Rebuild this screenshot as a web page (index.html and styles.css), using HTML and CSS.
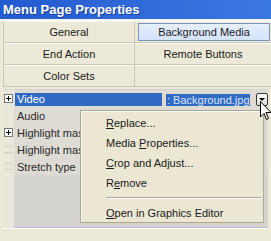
FILE: index.html
```html
<!DOCTYPE html>
<html lang="en">

<head>
  <meta charset="UTF-8">
  <title>Menu Page Properties</title>
  <link rel="stylesheet" href="styles.css">
</head>

<body>
  <div class="title">Menu Page Properties</div>
  <div class="titleLine"></div>

  <div class="tabs">
    <div class="tab">General</div>
    <div class="tab"><span class="tabSel">Background Media</span></div>
    <div class="tab">End Action</div>
    <div class="tab">Remote Buttons</div>
    <div class="tab">Color Sets</div>
    <div class="tab"></div>
  </div>

  <div class="props">
    <div class="row">
      <span class="gutter"><span class="plus"></span></span>
      <span class="label sel">Video</span>
      <span class="value sel">: Background.jpg</span>
      <span class="drop"></span>
    </div>
    <div class="row">
      <span class="gutter"></span>
      <span class="label">Audio</span>
    </div>
    <div class="row">
      <span class="gutter"><span class="plus"></span></span>
      <span class="label">Highlight mask</span>
    </div>
    <div class="row">
      <span class="gutter"><span class="tree"></span></span>
      <span class="label">Highlight mask</span>
    </div>
    <div class="row">
      <span class="gutter"><span class="tree"></span></span>
      <span class="label">Stretch type</span>
    </div>
    <div class="rest"><span class="gutter"></span></div>
  </div>
  <div class="bottomLine"></div>

  <!-- context menu over the grid -->
  <div class="menu">
    <div class="item"><u>R</u>eplace...</div>
    <div class="item">Media <u>P</u>roperties...</div>
    <div class="item"><u>C</u>rop and Adjust...</div>
    <div class="item">R<u>e</u>move</div>
    <div class="menuSep"></div>
    <div class="item"><u>O</u>pen in Graphics Editor</div>
  </div>

  <svg class="cursor" width="12" height="20" viewBox="0 0 12 20">
    <path d="M0.5 0.5 L0.5 16 L4 12.5 L6.5 18.5 L8.5 17.5 L6 11.5 L11 11.5 Z" fill="#fff" stroke="#000" stroke-width="1" />
  </svg>
</body>

</html>
```

FILE: styles.css
```css
body {
  margin: 0;
  width: 271px;
  height: 241px;
  overflow: hidden;
  background-color: #ece9d8;
  font-family: "Liberation Sans", Arial, sans-serif;
  font-size: 11px;
  color: #000;
  position: relative;
}

.title {
  height: 19px;
  line-height: 19px;
  padding-left: 3px;
  background: linear-gradient(to right, #245ad0, #3b79e2);
  color: #fff;
  font-weight: bold;
  font-size: 13px;
  text-shadow: 1px 1px 0 #1a3f99;
}

.titleLine {
  height: 2px;
  background-color: #f6f5ef;
}

.tabs {
  margin-left: 3px;
  border-left: 1px solid #c9c6b6;
  display: grid;
  grid-template-columns: 131px 136px;
  grid-auto-rows: 22px;
}

.tab {
  display: flex;
  align-items: center;
  justify-content: center;
  border-bottom: 1px solid #c9c6b6;
  box-shadow: inset 0 1px 0 #fbfaf6;
  color: #1a1a1a;
}

.tab:nth-child(odd) {
  border-right: 1px solid #c9c6b6;
}

.tabSel {
  align-self: stretch;
  flex: 1;
  margin: 2px 1px 1px 3px;
  display: flex;
  align-items: center;
  justify-content: center;
  background: linear-gradient(#e6effc, #d4e3fa);
  border: 1px solid #7d93bd;
}

.props {
  margin: 2px 3px 0 3px;
  height: 137px;
  background-color: #d4d3cf;
  display: flex;
  flex-direction: column;
  padding-top: 1px;
}

.row {
  height: 17px;
  display: flex;
  align-items: flex-end;
  padding-bottom: 1px;
  box-sizing: border-box;
  background-color: #dddbd3;
}

.gutter {
  width: 11px;
  align-self: stretch;
  background-color: #e9e6da;
  display: flex;
  align-items: center;
  justify-content: center;
  flex-shrink: 0;
  margin-bottom: -1px;
}

.plus {
  width: 7px;
  height: 7px;
  border: 1px solid #7a7a7a;
  background: linear-gradient(#000, #000) center / 5px 1px no-repeat,
    linear-gradient(#000, #000) center / 1px 5px no-repeat, #fff;
}

.tree {
  width: 7px;
  height: 5px;
  border-top: 1px dotted #b9b6a8;
  border-bottom: 1px dotted #b9b6a8;
}

.label {
  width: 145px;
  height: 13px;
  line-height: 13px;
  padding-left: 2px;
  margin-left: 1px;
  white-space: nowrap;
  overflow: hidden;
  color: #2a2a2a;
}

.value {
  width: 83px;
  height: 12px;
  line-height: 12px;
  padding-left: 1px;
  margin-left: 4px;
  white-space: nowrap;
}

.sel {
  background-color: #316ac5;
  color: #fff;
}

.value.sel {
  color: #dde6f6;
}

.drop {
  width: 10px;
  height: 11px;
  margin-left: 6px;
  border: 1px solid #35373c;
  border-radius: 2px;
  background: linear-gradient(#fdfdfb, #dcdad2);
  position: relative;
}

.drop::after {
  content: "";
  position: absolute;
  left: 2px;
  top: 4px;
  border-left: 3px solid transparent;
  border-right: 3px solid transparent;
  border-top: 3px solid #000;
}

.rest {
  flex: 1;
  display: flex;
}

.bottomLine {
  height: 1px;
  margin: 0 3px;
  background-color: #b5b9d9;
  border-bottom: 1px solid #fff;
}

.menu {
  position: absolute;
  left: 80px;
  top: 110px;
  width: 184px;
  height: 113px;
  padding-top: 2px;
  box-sizing: border-box;
  background-color: #ebe7d2;
  border: 1px solid #aca899;
  box-shadow: inset 1px 1px 0 #fbfaf2, 1px 1px 0 #d6d2bd;
}

.item {
  height: 20px;
  line-height: 20px;
  padding-left: 25px;
  white-space: nowrap;
  color: #1a1a1a;
}

.menuSep {
  height: 1px;
  margin: 4px 1px 4px 25px;
  background-color: #aca899;
  border-bottom: 1px solid #fff;
}

.cursor {
  position: absolute;
  left: 260px;
  top: 101px;
}
```
